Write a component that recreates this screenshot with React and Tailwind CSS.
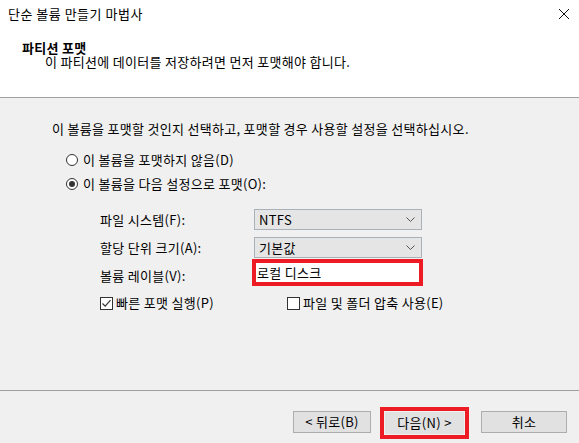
import React from 'react';

const font = { fontFamily: '"Noto Sans CJK KR", "Noto Sans", sans-serif' };

function Radio({ checked, label }) {
  return (
    <div className="flex items-center h-[16px]">
      <span className="w-[12px] h-[12px] rounded-full border border-[#333] bg-white flex items-center justify-center">
        {checked && <span className="w-[6px] h-[6px] rounded-full bg-[#333]" />}
      </span>
      <span className="ml-[5px]">{label}</span>
    </div>
  );
}

function Checkbox({ checked, label }) {
  return (
    <div className="flex items-center h-[16px]">
      <span className="w-[13px] h-[13px] border border-[#333] bg-white flex items-center justify-center">
        {checked && (
          <svg width="11" height="11" viewBox="0 0 11 11">
            <path d="M1.5 5.5 L4.2 8.2 L9.5 2.2" fill="none" stroke="#333" strokeWidth="1.2" />
          </svg>
        )}
      </span>
      <span className="ml-[3px]">{label}</span>
    </div>
  );
}

function Select({ value }) {
  return (
    <div className="w-[168px] h-[21px] border border-[#a9b1b9] bg-[#e5e5e5] flex items-center justify-between pl-[4px] pr-[6px]">
      <span>{value}</span>
      <svg width="9" height="5" viewBox="0 0 9 5">
        <path d="M0.5 0.5 L4.5 4.5 L8.5 0.5" fill="none" stroke="#555" strokeWidth="1" />
      </svg>
    </div>
  );
}

export default function App() {
  return (
    <div className="w-[579px] h-[443px] bg-[#f0f0f0] text-[13px] tracking-[0.3px] text-black flex flex-col overflow-hidden" style={font}>
      {/* Header */}
      <div className="h-[98px] bg-white border-b border-[#a0a0a0] flex flex-col">
        <div className="h-[28px] flex items-center justify-between pl-[8px] pr-[8px]">
          <span className="tracking-[0.5px]">단순 볼륨 만들기 마법사</span>
          <svg width="12" height="12" viewBox="0 0 12 12" className="mr-[1px]">
            <path d="M1 1 L11 11 M11 1 L1 11" stroke="#111" strokeWidth="1" />
          </svg>
        </div>
        <div className="pl-[22px] mt-[13px] leading-[14px] font-bold">파티션 포맷</div>
        <div className="pl-[45px] leading-[13px]">이 파티션에 데이터를 저장하려면 먼저 포맷해야 합니다.</div>
      </div>

      {/* Body */}
      <div className="h-[293px] border-b border-[#a0a0a0] pl-[52px] pt-[23px]">
        <div className="leading-[16px]">이 볼륨을 포맷할 것인지 선택하고, 포맷할 경우 사용할 설정을 선택하십시오.</div>
        <div className="pl-[14px] mt-[15px] flex flex-col gap-[8px]">
          <Radio label="이 볼륨을 포맷하지 않음(D)" />
          <Radio checked label="이 볼륨을 다음 설정으로 포맷(O):" />
        </div>
        <div className="pl-[48px] mt-[17px] flex flex-col">
          <div className="flex items-center">
            <span className="w-[154px]">파일 시스템(F):</span>
            <Select value="NTFS" />
          </div>
          <div className="flex items-center mt-[7px]">
            <span className="w-[154px]">할당 단위 크기(A):</span>
            <Select value="기본값" />
          </div>
          <div className="flex items-center mt-[1px]">
            <span className="w-[152px] pt-[6px]">볼륨 레이블(V):</span>
            <div className="w-[171px] h-[27px] border-[4px] border-[#ed1c24] bg-white flex items-center pl-[1px]">
              로컬 디스크
            </div>
          </div>
          <div className="flex items-center mt-[9px]">
            <div className="w-[187px]">
              <Checkbox checked label="빠른 포맷 실행(P)" />
            </div>
            <Checkbox label="파일 및 폴더 압축 사용(E)" />
          </div>
        </div>
      </div>

      {/* Footer */}
      <div className="flex-1 flex items-start pt-[16px] pl-[293px]">
        <div className="mt-[4px] w-[78px] h-[22px] border border-[#adadad] bg-[#e1e1e1] flex items-center justify-center">
          &lt; 뒤로(B)
        </div>
        <div className="ml-[9px] border-[4px] border-[#ed1c24] p-[1px]">
          <div className="w-[79px] h-[22px] bg-[#e1e1e1] flex items-center justify-center">다음(N) &gt;</div>
        </div>
        <div className="ml-[12px] mt-[4px] w-[86px] h-[22px] border border-[#adadad] bg-[#e1e1e1] flex items-center justify-center">
          취소
        </div>
      </div>
    </div>
  );
}
